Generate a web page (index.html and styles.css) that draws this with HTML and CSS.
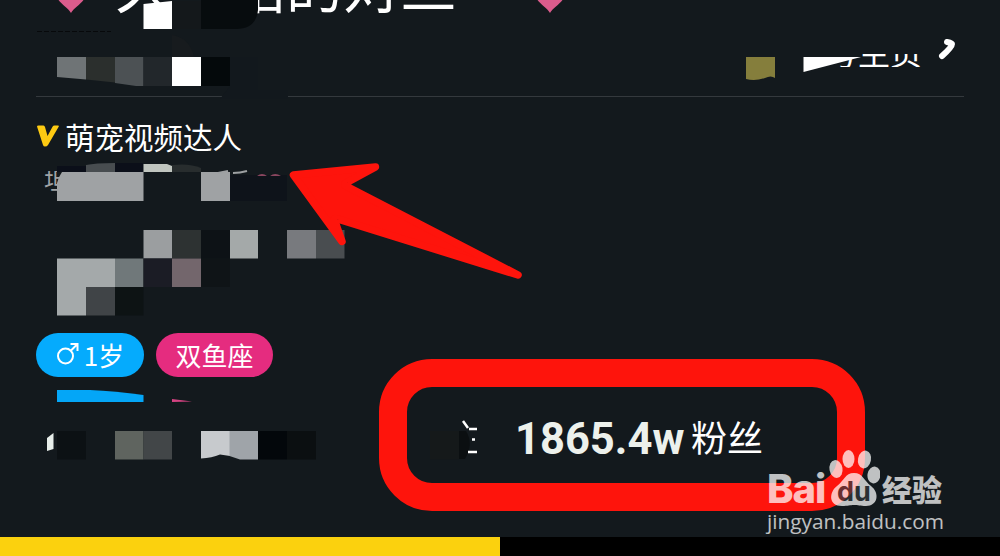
FILE: index.html
```
<!DOCTYPE html>
<html lang="zh-CN">
<head>
  <meta charset="UTF-8" />
  <meta name="viewport" content="width=device-width, initial-scale=1.0" />
  <title>萌宠视频达人</title>
  <link rel="stylesheet" href="styles.css">
</head>
<body>
  <div class="profile">
    <div class="name-row">
      <svg class="heart" viewBox="0 0 32 30"><path d="M16 29C12 22 1 18 1 9C1 1 12-1 16 6C20-1 31 1 31 9C31 18 20 22 16 29Z"/></svg>
      <h1>久　始的对三</h1>
      <svg class="heart" viewBox="0 0 32 30"><path d="M16 29C12 22 1 18 1 9C1 1 12-1 16 6C20-1 31 1 31 9C31 18 20 22 16 29Z"/></svg>
    </div>

    <div class="home-row">
      <div class="home-link"><span>号主页</span></div>
      <svg class="chevron" viewBox="0 0 20 24"><path d="M9 3Q14 4 14 5Q14 8 4 17" /></svg>
    </div>

    <div class="verify">
      <svg viewBox="0 0 22 22"><path d="M0 1.5Q0 .5 1.5.5L6.5.5Q7.5.5 8 2L10.5 11L15.5 1.8Q16.2.5 17.5.5L21 .5Q22.500.5 21.500 2L11 20Q10 21.500 8 21.500Q6.500 21.500 6 20Z"/></svg>
      <span>萌宠视频达人</span>
    </div>

    <div class="intro"><span>坦</span></div>

    <div class="tags">
      <span class="tag tag-age">
        <svg viewBox="0 0 24 24"><circle cx="9.500" cy="14" r="7.500"/><path d="M15 8.500L21 2.500M14.500 2H21.500V9"/></svg>
        1岁
      </span>
      <span class="tag tag-sign">双鱼座</span>
    </div>

    <div class="stats">
      <b>1865.4w</b><span>粉丝</span>
    </div>
  </div>

  <div class="progress"><div class="progress-bar"></div></div>

  <!-- Mosaic over the private parts -->
  <svg class="mosaic" viewBox="0 0 1000 556">
    <path fill="#070c0e" d="M201 0H258V10Q256 29 236 29H201Z"/>
    <path fill="#14181b" d="M172 1H201V29H172Z"/>
    <path fill="#fff" d="M143.500 4L172 1V29H143.500Z"/>
    <path stroke-width="1" stroke="#07090b" stroke-dasharray="5 2" d="M37 31.500H111"/>
    <path fill="#171b1e" d="M172 35Q190 38 194 57H172Z"/>

    <path fill="#6f7476" d="M57 57H86V79.500L57 77Z"/>
    <path fill="#2b2f2d" d="M86 57H115V82.500L86 79.500Z"/>
    <path fill="#4c5154" d="M115 57H143.500V86H136L115 83Z"/>
    <path fill="#22272b" d="M143.500 57H172V86H143.500Z"/>
    <path fill="#fff" d="M172 57H201V86H172Z"/>
    <path fill="#04090b" d="M201 57H230V86H201Z"/>
    <path fill="#12181d" d="M230 57H258V90H288V99H220L230 86Z"/>

    <path fill="#857e3c" d="M746 57H775V78Q771 75 765 78Q755 81.500 746 79Z"/>
    <path fill="#13191d" d="M825 50H858V57H825Z"/>
    <path fill="#fff" d="M803.500 57H861L803.500 72Z"/>

    <path fill="#0b0f19" d="M57 166H86V172H57ZM115 163H143V172H115Z"/>
    <path fill="#0e131a" d="M230 175H287V201H230Z"/>
    <path fill="#484d50" d="M86 165Q95 163 115 163V172H86Z"/>
    <path fill="#c0c5bf" d="M143.500 164H167L172 166V172H143.500Z"/>
    <path fill="#282d2e" d="M172 165Q190 163 201 168V172H172Z"/>
    <path fill="#9fa2a4" d="M62 172H143.500V201H57V183Q59 176 62 172Z"/>
    <path fill="#9fa2a4" d="M201 172H230V201H201Z"/>
    <path fill="none" stroke="#9da0a2" stroke-width="2" d="M218 173L228 171M233 173Q240 173 247 171"/>
    <path fill="#8a465f" d="M257 176Q262 172 267 176ZM270 176Q275 172 281 176Z"/>

    <path fill="#9b9ea0" d="M143.500 230H172V258.500H143.500Z"/>
    <path fill="#2d3232" d="M172 230H201V258.500H172Z"/>
    <path fill="#0d1216" d="M201 230H230V258.500H201Z"/>
    <path fill="#a4a9a9" d="M230 230H258V258.500H230Z"/>
    <path fill="#787a7e" d="M287 230H316V258.500H287Z"/>
    <path fill="#494d50" d="M316 230H344.500V258.500H316Z"/>
    <path fill="#a4a9aa" d="M57 258.500H115V287H86V315.500H57Z"/>
    <path fill="#70787a" d="M115 258.500H143.500V287H115Z"/>
    <path fill="#1b1c25" d="M143.500 258.500H172V287H143.500Z"/>
    <path fill="#73666c" d="M172 258.500H201V287H172Z"/>
    <path fill="#0f1417" d="M201 258.500H230V287H201Z"/>
    <path fill="#404447" d="M86 287H115V315.500H86Z"/>
    <path fill="#0d1314" d="M115 287H143.500V315.500H115Z"/>

    <path fill="#04a6f7" d="M57 390H90Q115 391 143.500 395V402H57Z"/>
    <path fill="#d54382" d="M172 399L192 401.500L172 402Z"/>

    <path fill="#e8eeea" d="M47 438L53.500 433V449L47 451Z"/>
    <path fill="#0c1114" d="M57 431H86V459.500H57Z"/>
    <path fill="#5f645f" d="M115 431H143.500V459.500H115Z"/>
    <path fill="#424648" d="M143.500 431H172V459.500H143.500Z"/>
    <path fill="#c7cacd" d="M201 431H230V456L220 454.500Q212 458 201 458.500Z"/>
    <path fill="#9fa4a9" d="M229.500 431H258V459.500H240L229.500 456Z"/>
    <path fill="#03070b" d="M258 431H287V459.500H258Z"/>
    <path fill="#0b0f11" d="M287 431H316V459.500H287ZM459 431H466Q474 444 465 459H459Z"/>
    <path fill="#15191a" d="M430 431H459V459.500H430Z"/>
    <path fill="none" stroke="#fff" stroke-width="2.500" d="M463 421L468 428M469 429H477M475 439.500H472M468 452H477"/>
  </svg>

  <!-- Red marks -->
  <svg class="arrow" viewBox="0 0 240 120"><path d="M7.500 17L89.500 9L60 25Q57.500 26.500 60 28L232 117L50 60.500Q48 60 48.500 62L56 83.500Z"/></svg>
  <div class="frame"></div>

  <div class="watermark">
    <div class="logo">
      <span class="bai">Bai</span>
      <svg viewBox="0 0 52 58">
        <ellipse cx="8" cy="20" rx="6.500" ry="9" transform="rotate(-10 8 20)"/>
        <ellipse cx="20.500" cy="10" rx="6" ry="9"/>
        <ellipse cx="36.500" cy="10.500" rx="6.500" ry="9" transform="rotate(12 36.500 10.500)"/>
        <ellipse cx="46" cy="26" rx="6.500" ry="8.500" transform="rotate(10 46 26)"/>
        <path d="M26 24C35 24 36 32 43 37C52 44 50 57 38 57C32 57 30 56 26 56C22 56 20 57 14 57C0 57 1 43 9 37C16 32 17 24 26 24Z"/>
        <text x="9" y="52">du</text>
      </svg>
      <span class="jingyan">经验</span>
    </div>
    <div class="site">jingyan.baidu.com</div>
  </div>
</body>
</html>
```

FILE: styles.css
```
* { box-sizing: border-box; margin: 0; padding: 0; }
html, body { height: 100%; }
body { position: relative; overflow: hidden; background: #000; color: #fff; font-family: "Noto Sans CJK SC", sans-serif; }
svg { display: block; flex: none; }

.profile { height: 537px; padding: 0 36px; background: #13191d; overflow: hidden; }

.name-row { display: flex; align-items: flex-end; height: 14px; padding-left: 19px; }
.name-row h1 { width: 342px; margin: 0 77px 2px 28px; font-size: 57px; line-height: 57px; font-weight: 400; white-space: nowrap; }
.heart { width: 32px; height: 30px; fill: #db5c8c; }

.home-row { display: flex; justify-content: flex-end; align-items: flex-end; height: 83px; padding: 0 6px 29px 0; border-bottom: 1px solid #34393d; }
.home-link { display: flex; align-items: flex-end; height: 13px; overflow: hidden; }
.home-link span { font-size: 32px; line-height: 32px; }
.chevron { width: 20px; height: 24px; margin: 0 0 4px 16px; fill: none; stroke: #fff; stroke-width: 6; stroke-linecap: round; stroke-linejoin: round; }

.verify { display: flex; align-items: center; height: 40px; margin-top: 19px; padding-left: 1px; font-size: 29.5px; line-height: 40px; }
.verify svg { width: 22px; height: 22px; margin-right: 6px; fill: #fdca12; }

.intro { display: flex; align-items: flex-end; height: 20px; margin-top: 15px; margin-bottom: 142px; padding-left: 8px; overflow: hidden; color: #a0a3a5; }
.intro span { font-size: 24px; line-height: 24px; }

.tags { display: flex; gap: 12px; }
.tag { display: flex; align-items: center; justify-content: center; height: 44px; padding-bottom: 2px; border-radius: 22px; font-size: 26px; }
.tag-age { width: 108px; background: #05abfd; }
.tag-age svg { width: 24px; height: 24px; margin-right: 4px; fill: none; stroke: #fff; stroke-width: 2; }
.tag-sign { width: 117px; background: #e52c7f; }

.stats { display: flex; align-items: baseline; margin-top: 34px; padding-left: 479px; line-height: 54px; color: #edf1ec; }
.stats b { width: 176px; font-family: Roboto, sans-serif; font-size: 43.5px; }
.stats span { position: relative; top: -2px; font-size: 36px; color: #fff; }

.progress { height: 19px; background: #000; }
.progress-bar { width: 50%; height: 100%; background: #fbd10e; }

.mosaic { position: absolute; top: 0; left: 0; width: 1000px; height: 556px; }
.arrow { position: absolute; top: 158px; left: 286px; width: 240px; height: 120px; overflow: visible; fill: #fe140c; stroke: #fe140c; stroke-width: 7.5; stroke-linejoin: round; }
.frame { position: absolute; top: 359px; left: 379px; width: 486px; height: 152px; border: 28px solid #fe140c; border-radius: 53px; }

.watermark { position: absolute; top: 449px; left: 767px; color: #fff; opacity: 0.73; }
.logo { display: flex; align-items: flex-end; height: 58px; }
.logo svg { width: 52px; height: 58px; margin-left: 1px; fill: #fff; }
.logo text { font: bold 27px Inter, sans-serif; fill: #33383c; }
.bai { width: 60px; font: 800 40px/36px Inter, sans-serif; letter-spacing: -1px; }
.jingyan { margin-left: 2px; font-size: 30px; line-height: 38px; font-weight: 900; }
.site { padding-top: 2px; font: 20.8px/24px "Open Sans", sans-serif; }
```
